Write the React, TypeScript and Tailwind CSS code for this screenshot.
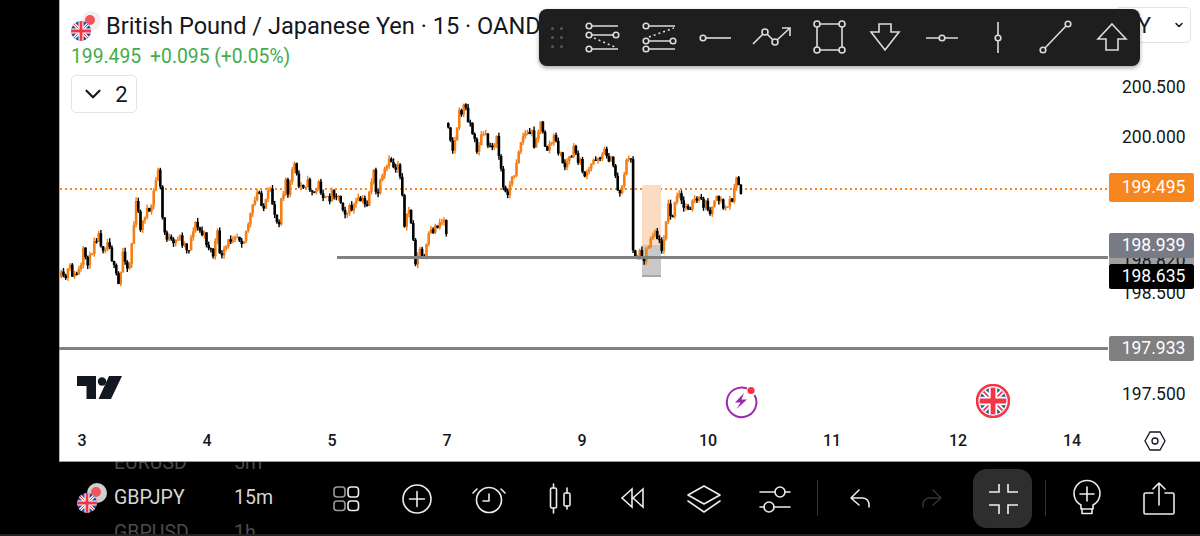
import {ReactNode} from 'react';
import {ChevronDown} from 'lucide-react';

// price path read off the chart, one list per unbroken run of candles
const firstRun = [[60,277],[63,282],[68,267],[73,277],[80,268],[82,253],[88,263],[93,238],[97,235],[102,247],[108,240],[112,267],[118,288],[122,247],[127,273],[135,203],[140,230],[145,207],[148,217],[157,167],[160,200],[162,230],[172,247],[177,235],[187,250],[193,223],[203,237],[213,257],[215,228],[220,260],[227,243],[233,232],[242,240],[248,220],[257,190],[263,210],[268,190],[277,227],[280,197],[285,177],[287,202],[292,158],[297,187],[305,182],[313,193],[317,183],[325,203],[332,190],[338,198],[345,213],[353,205],[360,200],[365,207],[372,170],[375,197],[385,168],[390,160],[393,170],[397,162],[402,197],[403,230],[408,207],[415,267],[418,247],[422,262],[428,235],[437,223],[443,220],[446,237]];
const secondRun = [[447,123],[452,153],[457,117],[463,105],[470,127],[475,150],[482,133],[488,147],[495,138],[500,170],[503,197],[512,178],[517,150],[522,135],[530,132],[533,143],[539,123],[545,150],[553,138],[563,167],[573,150],[585,178],[593,158],[605,152],[613,168],[618,197],[625,162],[630,160],[632,257],[640,253],[643,257],[653,227],[660,250],[667,207],[670,220],[677,193],[682,208],[697,200],[710,210],[718,197],[723,210],[730,200],[735,182],[740,192]];

let seed = 11;
const rand = () => {
    seed = (seed * 16807) % 2147483647;
    return seed / 2147483647;
};

const buildCandles = (points: number[][]) => {
    const candles = [];
    let open = points[0][1];
    let segment = 0;
    for (let x = points[0][0]; x <= points[points.length - 1][0]; x += 2.2) {
        while (points[segment + 1][0] < x) segment++;
        const [x1, y1] = points[segment];
        const [x2, y2] = points[segment + 1];
        const close = y1 + ((x - x1) / (x2 - x1)) * (y2 - y1) + (rand() - 0.5) * 11;
        candles.push({
            x,
            open,
            close,
            high: Math.min(open, close) - rand() * 4,
            low: Math.max(open, close) + rand() * 4,
        });
        open = close;
    }
    return candles;
};

// orange first so the black candles sit on top, as they do in the chart
const allCandles = [...buildCandles(firstRun), ...buildCandles(secondRun)];
const candles = [...allCandles.filter(c => c.close < c.open), ...allCandles.filter(c => c.close >= c.open)];

const Candles = () => (
    <svg width="1141" height="461" viewBox="59 0 1141 461" className="absolute left-0 top-0">
        {candles.map((c, i) => {
            const color = c.close < c.open ? '#f57f17' : '#000000';
            return (
                <g key={i} fill={color}>
                    <rect x={c.x + 0.6} y={c.high} width="1.4" height={c.low - c.high}/>
                    <rect x={c.x} y={Math.min(c.open, c.close)} width="2.6" height={Math.max(Math.abs(c.open - c.close), 1)}/>
                </g>
            );
        })}
    </svg>
);

const UkFlag = ({size, id, ring}: { size: number; id: string; ring?: boolean }) => (
    <svg width={size} height={size} viewBox="0 0 32 32" className="block">
        <clipPath id={id}>
            <circle cx="16" cy="16" r={ring ? 12.5 : 16}/>
        </clipPath>
        {ring && <circle cx="16" cy="16" r="15" fill="#fff" stroke="#f23645" strokeWidth="2.4"/>}
        <g clipPath={`url(#${id})`}>
            <rect width="32" height="32" fill="#2a4b9b"/>
            <path d="M0 0 32 32M32 0 0 32" stroke="#fff" strokeWidth="5"/>
            <path d="M0 0 32 32M32 0 0 32" stroke="#f23645" strokeWidth="1.6"/>
            <path d="M16 0V32M0 16H32" stroke="#fff" strokeWidth="8"/>
            <path d="M16 0V32M0 16H32" stroke="#f23645" strokeWidth="4.5"/>
        </g>
    </svg>
);

const PairFlags = ({id, back}: { id: string; back: string }) => (
    <div className="relative w-[30px] h-[30px]">
        <div className={`absolute right-0 top-0 w-[20px] h-[20px] rounded-full ${back}`}>
            <div className="absolute left-[4px] top-[4px] w-[10px] h-[10px] rounded-full bg-[#f2545b]"/>
        </div>
        <div className="absolute left-0 bottom-0">
            <UkFlag size={20} id={id}/>
        </div>
    </div>
);

const ToolIcon = ({children}: { children: ReactNode }) => (
    <div className="w-[56.6px] flex justify-center">
        <svg width="40" height="40" viewBox="-20 -20 40 40" fill="none" stroke="#dcdcdc" strokeWidth="1.6">
            {children}
        </svg>
    </div>
);

const Toolbar = () => (
    <div className="absolute left-[480px] top-[9px] w-[601px] h-[57px] bg-[#1e1e1e] rounded-lg shadow-[0_2px_4px_rgba(0,0,0,0.35)] flex items-center">
        <div className="w-[35px] flex justify-center">
            <div className="grid grid-cols-2 gap-x-[6px] gap-y-[6px]">
                {[0, 1, 2, 3, 4, 5].map(i => <div key={i} className="w-[3px] h-[3px] rounded-full bg-[#585858]"/>)}
            </div>
        </div>
        <ToolIcon>
            <circle cx="-13" cy="-12" r="2.8"/><circle cx="-13" cy="-3" r="2.8"/><circle cx="14" cy="-3" r="2.8"/><circle cx="-13" cy="11" r="2.8"/>
            <path d="M-10-12H16M-10-3H11M-10 11H16"/>
            <path d="M-8 0 13 9" strokeDasharray="2 3"/>
        </ToolIcon>
        <ToolIcon>
            <circle cx="-13" cy="-12" r="2.8"/><circle cx="-13" cy="3" r="2.8"/><circle cx="14" cy="3" r="2.8"/><circle cx="-13" cy="11" r="2.8"/>
            <path d="M-10-12H16M-10 3H11M-10 11H16"/>
            <path d="M-10-1 15-10" strokeDasharray="2 3"/>
        </ToolIcon>
        <ToolIcon>
            <circle cx="-12" cy="0" r="2.8"/>
            <path d="M-9 0H16"/>
        </ToolIcon>
        <ToolIcon>
            <circle cx="-7" cy="-6" r="3"/><circle cx="3" cy="4" r="3"/>
            <path d="M-19 6-9-4M-5-4 1 2M5 2 18-10M10-10H18V-2"/>
        </ToolIcon>
        <ToolIcon>
            <circle cx="-12" cy="-14" r="3"/><circle cx="13" cy="-14" r="3"/><circle cx="-12" cy="12" r="3"/><circle cx="13" cy="12" r="3"/>
            <path d="M-9-14H10M-9 12H10M-12-11V9M13-11V9"/>
        </ToolIcon>
        <ToolIcon>
            <path d="M-6-14H6V-6H14L0 12-14-6H-6Z"/>
        </ToolIcon>
        <ToolIcon>
            <circle cx="0" cy="0" r="2.8"/>
            <path d="M-16 0H-3M3 0H16"/>
        </ToolIcon>
        <ToolIcon>
            <circle cx="0" cy="0" r="2.8"/>
            <path d="M0-16V-3M0 3V15"/>
        </ToolIcon>
        <ToolIcon>
            <circle cx="-12" cy="12" r="2.8"/><circle cx="13" cy="-14" r="2.8"/>
            <path d="M-10 10 11-12"/>
        </ToolIcon>
        <ToolIcon>
            <path d="M0-14 14 1H6V12H-6V1H-14Z"/>
        </ToolIcon>
    </div>
);

const BarIcon = ({children}: { children: ReactNode }) => (
    <div className="w-[71.6px] flex justify-center shrink-0">
        <svg width="40" height="40" viewBox="-20 -20 40 40" fill="none" stroke="#ececec" strokeWidth="1.6" strokeLinecap="round" strokeLinejoin="round">
            {children}
        </svg>
    </div>
);

const PriceLabel = ({top, height, bg, children}: { top: number; height: number; bg: string; children: ReactNode }) => (
    <div className={`absolute left-[1050px] w-[85px] pl-[4px] rounded-[2px] text-white text-[17.5px] flex items-center justify-center ${bg}`}
         style={{top, height}}>
        {children}
    </div>
);

const AxisPrice = ({top, children}: { top: number; children: ReactNode }) => (
    <div className="absolute left-[1063px] text-[17.5px] leading-[22px] text-[#131722]" style={{top}}>{children}</div>
);

const DayLabel = ({left, children}: { left: number; children: ReactNode }) => (
    <div className="absolute top-[431px] w-[30px] -ml-[15px] text-center text-[16px] leading-[20px] font-medium text-[#131722]" style={{left}}>
        {children}
    </div>
);

const Chart = () => (
    <div className="relative flex-1 bg-white overflow-hidden border-b-[1.5px] border-[#9a9a9a] shadow-[inset_1px_0_0_#b4b4b4]">
        {/* orange dotted last price line */}
        <div className="absolute left-[1px] top-[188px] w-[1048px] h-[2px] bg-[repeating-linear-gradient(90deg,#f7861e_0_2px,transparent_2px_5px)]"/>

        {/* long/short box */}
        <div className="absolute left-[583px] top-[185px] w-[19px] h-[60px] bg-[#fbdcc3]"/>
        <div className="absolute left-[583px] top-[245px] w-[19px] h-[32px] bg-[#c9c9c9] border-b-2 border-[#a8a8a8]"/>

        <Candles/>

        <div className="absolute left-[278px] top-[256px] w-[771px] h-[3px] bg-[#808080]"/>
        <div className="absolute left-0 top-[347px] w-[1049px] h-[3px] bg-[#808080]"/>

        <AxisPrice top={76}>200.500</AxisPrice>
        <AxisPrice top={126}>200.000</AxisPrice>
        <AxisPrice top={282}>198.500</AxisPrice>
        <AxisPrice top={383}>197.500</AxisPrice>

        <PriceLabel top={173} height={29} bg="bg-[#f7861e]">199.495</PriceLabel>
        <div className="absolute left-[1050px] top-[255px] w-[85px] h-[9px] bg-[#a0a0a0]"/>
        <AxisPrice top={249}>198.820</AxisPrice>
        <PriceLabel top={233} height={25} bg="bg-[#787b86]">198.939</PriceLabel>
        <PriceLabel top={264} height={25} bg="bg-black">198.635</PriceLabel>
        <PriceLabel top={336} height={25} bg="bg-[#808080]">197.933</PriceLabel>

        <div className="absolute left-[12px] top-[11px]">
            <div className="flex items-center">
                <PairFlags id="head-flag" back="bg-[#f0f0f0]"/>
                <div className="ml-[5px] text-[23.6px] leading-[30px] text-[#131722] whitespace-nowrap">
                    British Pound / Japanese Yen · 15 · OANDA
                </div>
            </div>
            <div className="flex gap-[9px] text-[19.3px] leading-[24px] text-[#43ab4b] mt-[4px]">
                <span>199.495</span>
                <span>+0.095 (+0.05%)</span>
            </div>
            <div className="mt-[6px] w-[66px] h-[38px] rounded-[5px] border border-[#e0e3eb] flex items-center justify-center gap-[9px] text-[22px] text-[#131722]">
                <ChevronDown size={26} strokeWidth={2}/>
                <span>2</span>
            </div>
        </div>

        <div className="absolute left-[1056px] top-[7px] w-[76px] h-[36px] rounded-[5px] border border-[#e0e3eb] flex items-center justify-end gap-[22px] pr-[5px] text-[22px] text-[#131722]">
            <span>Y</span>
            <ChevronDown size={12} strokeWidth={3}/>
        </div>

        <Toolbar/>

        {/* tradingview mark */}
        <svg width="46" height="23" viewBox="0 0 46 23" className="absolute left-[18px] top-[376px]" fill="#131722">
            <path d="M0 0H19V23H9.500V10H0Z"/>
            <circle cx="25" cy="5.500" r="4.200"/>
            <path d="M32 0H45L34 23H21.500Z"/>
        </svg>

        <svg width="36" height="36" viewBox="0 0 36 36" className="absolute left-[664px] top-[383px]" fill="none">
            <path d="M24 5.500A14.800 14.800 0 1 0 31.500 12" stroke="#9c27b0" strokeWidth="2"/>
            <path d="M21 10 12 19.500H17.500L13.500 26 24 16.500H18.500Z" fill="#9c27b0"/>
            <circle cx="28" cy="7.500" r="3.600" fill="#f23645"/>
        </svg>
        <div className="absolute left-[917px] top-[384px]">
            <UkFlag size={34} id="event-flag" ring/>
        </div>

        <DayLabel left={23}>3</DayLabel>
        <DayLabel left={148}>4</DayLabel>
        <DayLabel left={273}>5</DayLabel>
        <DayLabel left={388}>7</DayLabel>
        <DayLabel left={523}>9</DayLabel>
        <DayLabel left={649}>10</DayLabel>
        <DayLabel left={773}>11</DayLabel>
        <DayLabel left={899}>12</DayLabel>
        <DayLabel left={1013}>14</DayLabel>

        <svg width="24" height="24" viewBox="0 0 24 24" className="absolute left-[1084px] top-[429px]" fill="none" stroke="#131722" strokeWidth="1.3">
            <path d="M7 3H17L22 12 17 21H7L2 12Z"/>
            <circle cx="12" cy="12" r="3"/>
        </svg>
    </div>
);

const Picker = () => (
    <div className="w-[310px] h-full shrink-0 overflow-hidden flex flex-col justify-center text-[19.5px]">
        <div className="h-[35px] shrink-0 flex items-center text-[#4a4a4a]">
            <span className="ml-[114px] w-[120px]">EURUSD</span>
            <span>5m</span>
        </div>
        <div className="h-[35px] shrink-0 flex items-center text-[#d6d6d6]">
            <div className="ml-[77px] w-[37px]"><PairFlags id="bar-flag" back="bg-[#cfcfcf]"/></div>
            <span className="w-[120px]">GBPJPY</span>
            <span>15m</span>
        </div>
        <div className="h-[35px] shrink-0 flex items-center text-[#4a4a4a]">
            <span className="ml-[114px] w-[120px]">GBPUSD</span>
            <span>1h</span>
        </div>
    </div>
);

const Divider = () => <div className="w-px h-[36px] bg-[#333] shrink-0"/>;

const BottomBar = () => (
    <div className="h-[74px] bg-black flex items-center border-b-2 border-[#222]">
        <Picker/>
        <BarIcon>
            <rect x="-12" y="-11" width="11" height="10" rx="3" stroke="#9a9a9a"/>
            <rect x="2" y="-11" width="10.500" height="10" rx="3"/>
            <rect x="-12" y="3" width="11" height="9.500" rx="3" stroke="#9a9a9a"/>
            <rect x="2" y="3" width="10.500" height="9.500" rx="3"/>
        </BarIcon>
        <BarIcon>
            <circle cx="0" cy="1" r="14"/>
            <path d="M-7.500 1H7.500M0-6.500V8.500"/>
        </BarIcon>
        <BarIcon>
            <circle cx="0" cy="2" r="12.500"/>
            <path d="M0-4V3H-6M-12-9-16-5M12-9 16-5"/>
        </BarIcon>
        <BarIcon>
            <rect x="-10.500" y="-10" width="6" height="20" rx="1.500"/>
            <path d="M-7.500-14V-10M-7.500 10V15"/>
            <rect x="3" y="-5" width="6" height="13" rx="1.500"/>
            <path d="M6-10V-5M6 8V11"/>
        </BarIcon>
        <BarIcon>
            <path d="M0-9-10 0 0 9ZM11-9 1 0 11 9Z" strokeLinejoin="miter"/>
        </BarIcon>
        <BarIcon>
            <path d="M0-12 16-3 0 6-16-3Z"/>
            <path d="M-16 3 0 14 16 3"/>
        </BarIcon>
        <BarIcon>
            <path d="M-15-6H0M10-6H15M-15 9H-11M-1 9H15"/>
            <circle cx="5" cy="-6" r="5"/>
            <circle cx="-6" cy="9" r="5"/>
        </BarIcon>
        <div className="ml-[6px]"><Divider/></div>
        <div className="w-[6px] shrink-0"/>
        <BarIcon>
            <path d="M-1-8-9 0-1 7M-9 0H3A6.500 6.500 0 0 1 9 6.500V9"/>
        </BarIcon>
        <BarIcon>
            <path d="M1-8 9 0 1 7M9 0H-3A6.500 6.500 0 0 0-9 6.500V9" stroke="#333"/>
        </BarIcon>
        <div className="ml-[6px] w-[59px] h-[59px] rounded-[14px] bg-[#2e2e2e] flex items-center justify-center shrink-0">
            <svg width="40" height="40" viewBox="-20 -20 40 40" fill="none" stroke="#f0f0f0" strokeWidth="1.6">
                <path d="M-14-6H-4V-14M5-14V-6H15M-14 7H-4V16M5 16V7H15"/>
            </svg>
        </div>
        <div className="ml-[13px]"><Divider/></div>
        <div className="w-[5px] shrink-0"/>
        <BarIcon>
            <path d="M-6 7A13 13 0 1 1 6 7V11H-6Z"/>
            <path d="M-7-4H7M0-11V3"/>
            <path d="M-5 11V15.500H5V11"/>
        </BarIcon>
        <BarIcon>
            <path d="M-6-5H-13.500A1.500 1.500 0 0 0-15-3.500V14.500A1.500 1.500 0 0 0-13.500 16H13.500A1.500 1.500 0 0 0 15 14.500V-3.500A1.500 1.500 0 0 0 13.500-5H6"/>
            <path d="M0 7V-15M-6-9 0-15 6-9"/>
        </BarIcon>
    </div>
);

export default function App() {
    return (
        <div className="w-[1200px] h-[536px] bg-black flex flex-col overflow-hidden font-['Roboto',sans-serif]">
            <div className="flex h-[462px]">
                <div className="w-[59px] shrink-0 bg-black"/>
                <Chart/>
            </div>
            <BottomBar/>
        </div>
    );
}
